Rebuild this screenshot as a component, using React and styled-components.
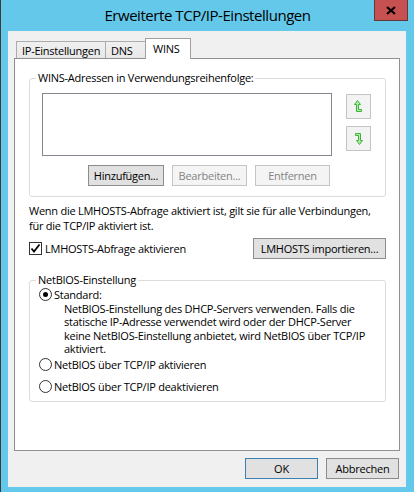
import React from 'react';
import styled, { createGlobalStyle, css } from 'styled-components';

const FONT = `"Open Sans", "Noto Sans", sans-serif`;

const Global = createGlobalStyle`
  html, body { margin: 0; padding: 0; background: #63C8E9; }
  body { font-family: ${FONT}; }
  #root { width: 414px; height: 492px; overflow: hidden; }
`;

const Window = styled.div`
  box-sizing: border-box;
  width: 414px;
  height: 492px;
  background: #63C8E9;
  border-left: 1px solid #3c3c3c;
  display: flex;
  flex-direction: column;
  font-family: ${FONT};
  font-size: 11px;
  letter-spacing: -0.25px;
  color: #000;
`;

const TitleBar = styled.div`
  height: 31px;
  flex: none;
  display: grid;
  grid-template-columns: 1fr auto 1fr;
  align-items: start;
`;

const Title = styled.div`
  grid-column: 2;
  font-size: 15px;
  letter-spacing: -0.45px;
  line-height: 30px;
  color: #000;
  white-space: nowrap;
`;

const CloseButton = styled.div`
  grid-column: 3;
  justify-self: end;
  margin-right: 6px;
  box-sizing: border-box;
  width: 34px;
  height: 21px;
  background: #C75050;
  border: 1px solid #5e3a3a;
  border-top: none;
  display: flex;
  align-items: center;
  justify-content: center;
`;

const Client = styled.div`
  flex: 1;
  margin: 0 8px 5px 7px;
  background: #F0F0F0;
  display: flex;
  flex-direction: column;
  padding: 7px 6px 8px 6px;
`;

const TabStrip = styled.div`
  height: 20px;
  display: flex;
  align-items: flex-end;
  padding-left: 2px;
  position: relative;
  z-index: 1;
`;

const Tab = styled.div`
  box-sizing: border-box;
  width: ${p => p.$w}px;
  height: 17px;
  border: 1px solid #ACACAC;
  border-bottom: none;
  background: linear-gradient(#F0F0F0, #E8E8E8);
  display: flex;
  align-items: center;
  padding-left: 5px;
  white-space: nowrap;
  & + & { margin-left: -1px; }
  ${p => p.$active && css`
    height: 21px;
    margin-bottom: -1px;
    background: #fff;
    border-color: #A0A0A0;
    padding-left: 7px;
    padding-bottom: 1px;
  `}
`;

const Panel = styled.div`
  box-sizing: border-box;
  height: 393px;
  background: #fff;
  border: 1px solid #8E8F8F;
  padding: 12px 13px 0 14px;
  display: flex;
  flex-direction: column;
`;

const Group = styled.fieldset`
  margin: 0;
  padding: 0;
  min-width: 0;
  border: 1px solid #DCDCDC;
  border-radius: 3px;
`;

const Legend = styled.legend`
  margin-left: 6px;
  padding: 0 2px;
  line-height: 14px;
`;

const WinsGrid = styled.div`
  display: grid;
  grid-template-columns: 290px 25px;
  column-gap: 14px;
  padding: 8px 14px 10px 12px;
`;

const ListBox = styled.div`
  box-sizing: border-box;
  height: 63px;
  border: 1px solid #828790;
  background: #fff;
`;

const ArrowColumn = styled.div`
  display: flex;
  flex-direction: column;
  gap: 7px;
  padding-top: 1px;
`;

const ArrowButton = styled.div`
  box-sizing: border-box;
  width: 25px;
  height: 25px;
  background: #F3F3F3;
  border: 1px solid #C4C4C4;
  display: flex;
  align-items: center;
  justify-content: center;
`;

const ButtonRow = styled.div`
  display: flex;
  justify-content: flex-end;
  gap: 8px;
  margin-top: 9px;
  padding-right: 2px;
`;

const Button = styled.button`
  box-sizing: border-box;
  width: ${p => p.$w}px;
  height: 21px;
  padding: 0;
  margin: 0;
  font-family: ${FONT};
  font-size: 11px;
  letter-spacing: -0.25px;
  color: #000;
  background: #E1E1E1;
  border: 1px solid #8C8C8C;
  border-radius: 0;
  white-space: nowrap;
  ${p => p.$default && css`border-color: #3C7FB1;`}
  ${p => p.disabled && css`
    background: #F4F4F4;
    border-color: #C4C4C4;
    color: #838383;
  `}
`;

const Paragraph = styled.p`
  margin: 6px 0 0 0;
  line-height: 15px;
  white-space: nowrap;
`;

const OptionRow = styled.div`
  display: flex;
  align-items: center;
  justify-content: space-between;
  margin-top: 5px;
  height: 21px;
`;

const CheckLabel = styled.label`
  display: flex;
  align-items: center;
  gap: 3px;
`;

const CheckBox = styled.span`
  box-sizing: border-box;
  width: 13px;
  height: 13px;
  border: 1px solid #333;
  background: #fff;
  display: flex;
  align-items: center;
  justify-content: center;
`;

const NetBiosGroup = styled(Group)`
  margin-top: 14px;
`;

const RadioList = styled.div`
  display: flex;
  flex-direction: column;
  padding: 0 8px 7px 9px;
`;

const RadioRow = styled.label`
  display: flex;
  align-items: center;
  gap: 2px;
  height: 15px;
  line-height: 15px;
  white-space: nowrap;
  margin-top: ${p => p.$gap || 0}px;
`;

const Radio = styled.span`
  box-sizing: border-box;
  width: 13px;
  height: 13px;
  border-radius: 50%;
  border: 1px solid #333;
  background: #fff;
  display: flex;
  align-items: center;
  justify-content: center;
  &::after {
    content: '';
    width: 5px;
    height: 5px;
    border-radius: 50%;
    background: ${p => (p.$checked ? '#000' : 'transparent')};
  }
`;

const Description = styled.div`
  padding-left: 25px;
  line-height: 13.33px;
  white-space: nowrap;
`;

const Footer = styled.div`
  display: flex;
  justify-content: flex-end;
  gap: 8px;
  margin-top: 7px;
  padding-right: 1px;
`;

const ARROW_PATH =
  'M3.5 0.5 L6.5 4.5 L4.5 4.5 L4.5 9.5 L7.5 9.5 L7.5 11.5 L2.5 11.5 L2.5 4.5 L0.5 4.5 Z';

const UpIcon = () => (
  <svg width="9" height="13" viewBox="0 0 9 13">
    <path d={ARROW_PATH} fill="#B4EEA6" stroke="#3DB23D" strokeWidth="1" />
  </svg>
);

const DownIcon = () => (
  <svg width="9" height="13" viewBox="0 0 9 13">
    <path d={ARROW_PATH} transform="rotate(180 4.5 6.5)" fill="#B4EEA6" stroke="#3DB23D" strokeWidth="1" />
  </svg>
);

const CloseIcon = () => (
  <svg width="10" height="9" viewBox="0 0 10 9">
    <path d="M1 1 L9 8 M9 1 L1 8" stroke="#000" strokeWidth="2.2" />
  </svg>
);

const CheckMark = () => (
  <svg width="11" height="11" viewBox="0 0 11 11">
    <path d="M1.5 5.5 L4 8.5 L9.5 1.5" fill="none" stroke="#000" strokeWidth="1.8" />
  </svg>
);

export default function App() {
  return (
    <>
      <Global />
      <Window>
        <TitleBar>
          <Title>Erweiterte TCP/IP-Einstellungen</Title>
          <CloseButton><CloseIcon /></CloseButton>
        </TitleBar>
        <Client>
          <TabStrip>
            <Tab $w={90}>IP-Einstellungen</Tab>
            <Tab $w={41}>DNS</Tab>
            <Tab $w={46} $active>WINS</Tab>
          </TabStrip>
          <Panel>
            <Group>
              <Legend>WINS-Adressen in Verwendungsreihenfolge:</Legend>
              <WinsGrid>
                <ListBox />
                <ArrowColumn>
                  <ArrowButton><UpIcon /></ArrowButton>
                  <ArrowButton><DownIcon /></ArrowButton>
                </ArrowColumn>
                <ButtonRow>
                  <Button $w={76}>Hinzufügen...</Button>
                  <Button $w={75} disabled>Bearbeiten...</Button>
                  <Button $w={75} disabled>Entfernen</Button>
                </ButtonRow>
              </WinsGrid>
            </Group>
            <Paragraph>
              Wenn die LMHOSTS-Abfrage aktiviert ist, gilt sie für alle Verbindungen,
              <br />
              für die TCP/IP aktiviert ist.
            </Paragraph>
            <OptionRow>
              <CheckLabel>
                <CheckBox><CheckMark /></CheckBox>
                LMHOSTS-Abfrage aktivieren
              </CheckLabel>
              <Button $w={133}>LMHOSTS importieren...</Button>
            </OptionRow>
            <NetBiosGroup>
              <Legend>NetBIOS-Einstellung</Legend>
              <RadioList>
                <RadioRow>
                  <Radio $checked />
                  Standard:
                </RadioRow>
                <Description>
                  NetBIOS-Einstellung des DHCP-Servers verwenden. Falls die
                  <br />
                  statische IP-Adresse verwendet wird oder der DHCP-Server
                  <br />
                  keine NetBIOS-Einstellung anbietet, wird NetBIOS über TCP/IP
                  <br />
                  aktiviert.
                </Description>
                <RadioRow $gap={2}>
                  <Radio />
                  NetBIOS über TCP/IP aktivieren
                </RadioRow>
                <RadioRow $gap={7}>
                  <Radio />
                  NetBIOS über TCP/IP deaktivieren
                </RadioRow>
              </RadioList>
            </NetBiosGroup>
          </Panel>
          <Footer>
            <Button $w={73} $default>OK</Button>
            <Button $w={73}>Abbrechen</Button>
          </Footer>
        </Client>
      </Window>
    </>
  );
}
